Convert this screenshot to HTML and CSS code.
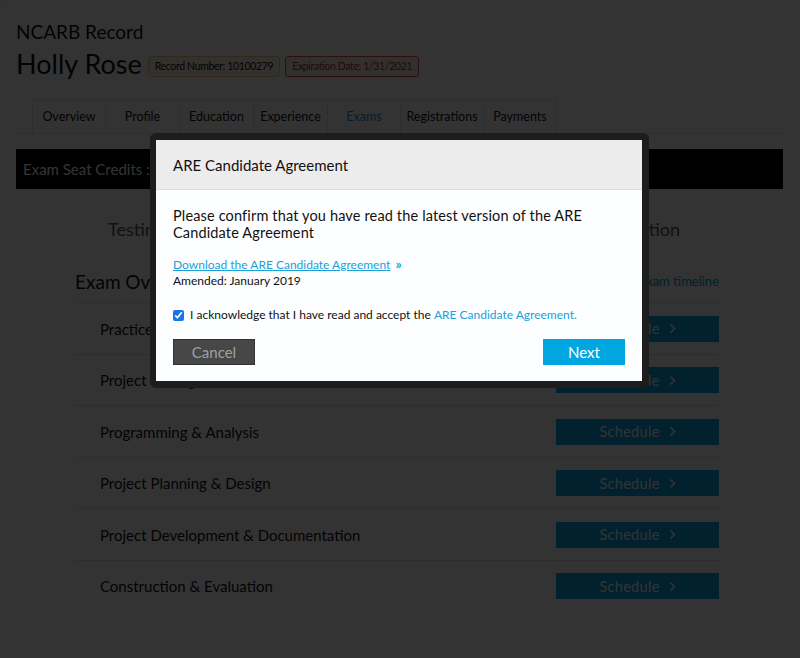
FILE: index.html
```html
<!DOCTYPE html>
<html>
<head>
<meta charset="utf-8">
<link rel="stylesheet" href="styles.css">
</head>
<body>
<div class="page">
  <div class="record-title">NCARB Record</div>
  <div class="name-row">
    <span class="name">Holly Rose</span>
    <span class="badge badge-record">Record Number: 10100279</span>
    <span class="badge badge-exp">Expiration Date: 1/31/2021</span>
  </div>
  <nav class="tabs">
    <span class="tab tab-narrow">Overview</span>
    <span class="tab">Profile</span>
    <span class="tab">Education</span>
    <span class="tab">Experience</span>
    <span class="tab tab-narrow active">Exams</span>
    <span class="tab tab-wide">Registrations</span>
    <span class="tab tab-last">Payments</span>
  </nav>
  <div class="credits">Exam Seat Credits : 6</div>
  <div class="sections">
    <span class="section-head">Testing Status</span>
    <span class="section-head">Exam Information</span>
  </div>
  <div class="overview">
    <div class="overview-head">
      <span class="overview-title">Exam Overview</span>
      <a class="timeline">View exam timeline</a>
    </div>
    <div class="exam-row"><span>Practice Management</span><span class="schedule">Schedule <svg class="chev" width="7" height="11" viewBox="0 0 7 11"><polyline points="1.5,1.5 5.5,5.5 1.5,9.5" fill="none" stroke="#fff" stroke-width="1.6"/></svg></span></div>
    <div class="exam-row"><span>Project Management</span><span class="schedule">Schedule <svg class="chev" width="7" height="11" viewBox="0 0 7 11"><polyline points="1.5,1.5 5.5,5.5 1.5,9.5" fill="none" stroke="#fff" stroke-width="1.6"/></svg></span></div>
    <div class="exam-row"><span>Programming &amp; Analysis</span><span class="schedule">Schedule <svg class="chev" width="7" height="11" viewBox="0 0 7 11"><polyline points="1.5,1.5 5.5,5.5 1.5,9.5" fill="none" stroke="#fff" stroke-width="1.6"/></svg></span></div>
    <div class="exam-row"><span>Project Planning &amp; Design</span><span class="schedule">Schedule <svg class="chev" width="7" height="11" viewBox="0 0 7 11"><polyline points="1.5,1.5 5.5,5.5 1.5,9.5" fill="none" stroke="#fff" stroke-width="1.6"/></svg></span></div>
    <div class="exam-row"><span>Project Development &amp; Documentation</span><span class="schedule">Schedule <svg class="chev" width="7" height="11" viewBox="0 0 7 11"><polyline points="1.5,1.5 5.5,5.5 1.5,9.5" fill="none" stroke="#fff" stroke-width="1.6"/></svg></span></div>
    <div class="exam-row"><span>Construction &amp; Evaluation</span><span class="schedule">Schedule <svg class="chev" width="7" height="11" viewBox="0 0 7 11"><polyline points="1.5,1.5 5.5,5.5 1.5,9.5" fill="none" stroke="#fff" stroke-width="1.6"/></svg></span></div>
  </div>
</div>

<div class="overlay"></div>
<div class="modal">
  <div class="modal-header">ARE Candidate Agreement</div>
  <div class="modal-body">
    <p class="confirm">Please confirm that you have read the latest version of the ARE Candidate Agreement</p>
    <p class="download"><a class="dl-link">Download the ARE Candidate Agreement</a> <span class="raquo">&raquo;</span></p>
    <p class="amended">Amended: January 2019</p>
    <label class="ack"><input type="checkbox" checked> I acknowledge that I have read and accept the <span class="ack-link">ARE Candidate Agreement.</span></label>
    <div class="actions">
      <button class="btn btn-cancel">Cancel</button>
      <button class="btn btn-next">Next</button>
    </div>
  </div>
</div>
</body>
</html>
```

FILE: styles.css
```css
* { box-sizing: border-box; }
html, body { margin: 0; padding: 0; }
body {
  font-family: Lato, "Open Sans", sans-serif;
  color: #111;
  background: #fff;
  width: 800px;
  height: 658px;
  overflow: hidden;
}
.page {
  padding: 19px 17px 0 15px;
  height: 658px;
  border-top: 1px solid #f2f2f2;
  border-left: 1px solid #f2f2f2;
}
.record-title {
  font-size: 19px;
  line-height: 24px;
}
.name-row {
  display: flex;
  align-items: center;
  gap: 5px;
  margin-top: 7px;
  height: 26px;
}
.name {
  font-size: 27px;
  line-height: 26px;
  margin-right: 1px;
}
.badge {
  font-size: 10.5px;
  letter-spacing: -0.35px;
  height: 21px;
  line-height: 19px;
  padding: 0 6px;
  border-radius: 3px;
  border: 1px solid;
  margin-top: 5px;
}
.badge-record { background: #fff6e2; border-color: #f0c786; color: #111; }
.badge-exp { background: #fbeaea; border-color: #d9534f; color: #b3302c; }
.tabs {
  display: flex;
  margin-top: 22px;
  padding-left: 16px;
  border-bottom: 1px solid #e6e6e6;
  height: 35px;
}
.tab {
  width: 74px;
  height: 34px;
  display: flex;
  align-items: center;
  justify-content: center;
  font-size: 12.5px;
  border-left: 1px solid #e6e6e6;
  border-top: 1px solid #e6e6e6;
}
.tab-narrow { width: 73px; }
.tab-wide { width: 83px; }
.tab-last { border-right: 1px solid #e6e6e6; }
.tab.active { color: #0a9bd0; }
.credits {
  margin-top: 15px;
  background: #000;
  color: #fff;
  height: 40px;
  line-height: 40px;
  padding-left: 7px;
  font-size: 15px;
}
.sections {
  display: flex;
  justify-content: space-between;
  padding: 0 103px 0 92px;
  margin-top: 29px;
  font-size: 18px;
  color: #555;
  line-height: 22px;
}
.overview {
  margin: 30px 64px 0 59px;
}
.overview-head {
  display: flex;
  justify-content: space-between;
  align-items: center;
  height: 22px;
  margin-bottom: 10px;
}
.overview-title { font-size: 19px; }
.timeline { font-size: 13px; color: #0a9bd0; }
.exam-row {
  display: flex;
  justify-content: space-between;
  align-items: center;
  height: 51.5px;
  border-top: 1px solid #e2e2e2;
  padding-left: 25px;
  padding-top: 1px;
  font-size: 15px;
}
.schedule {
  width: 163px;
  height: 26px;
  background: #00a6e0;
  color: #fff;
  display: flex;
  align-items: center;
  justify-content: center;
  font-size: 14.5px;
  letter-spacing: 0.3px;
}
.chev { margin-left: 9px; }

.overlay {
  position: fixed;
  inset: 0;
  background: rgba(0, 0, 0, 0.8);
}
.modal {
  position: absolute;
  left: 150px;
  top: 133px;
  width: 499px;
  border: 7px solid #1d1d1d;
  border-left-width: 6px;
  border-radius: 6px;
  background: #fff;
}
.modal-header {
  height: 50px;
  background: #ececec;
  border-bottom: 1px solid #dcdcdc;
  padding-left: 17px;
  font-size: 15px;
  line-height: 50px;
}
.modal-body {
  padding: 17px 17px 16px 17px;
  background: #fdfeff;
}
.modal-body p { margin: 0; }
.confirm {
  font-size: 14.5px;
  line-height: 17px;
  letter-spacing: 0.15px;
}
.download {
  margin-top: 15px !important;
  font-size: 12px;
  line-height: 16px;
}
.dl-link { color: #1a9fda; text-decoration: underline; }
.raquo { color: #1a9fda; margin-left: 2px; font-size: 14px; font-weight: bold; }
.amended {
  font-size: 12px;
  line-height: 16px;
}
.ack {
  display: flex;
  align-items: center;
  margin-top: 18px;
  font-size: 12px;
  line-height: 16px;
  white-space: pre;
}
.ack input {
  margin: 0 3px 0 0;
  width: 11px;
  height: 11px;
  accent-color: #1a73e8;
}
.ack-link { color: #1a9fda; }
.actions {
  display: flex;
  justify-content: space-between;
  margin-top: 16px;
}
.btn {
  width: 82px;
  height: 26px;
  font-family: Lato, "Open Sans", sans-serif;
  font-size: 15px;
  border: none;
  padding: 0;
}
.btn-cancel { background: #474747; color: #a0a0a0; border: 1px solid #333; }
.btn-next { background: #00a6e0; color: #fff; }
```
